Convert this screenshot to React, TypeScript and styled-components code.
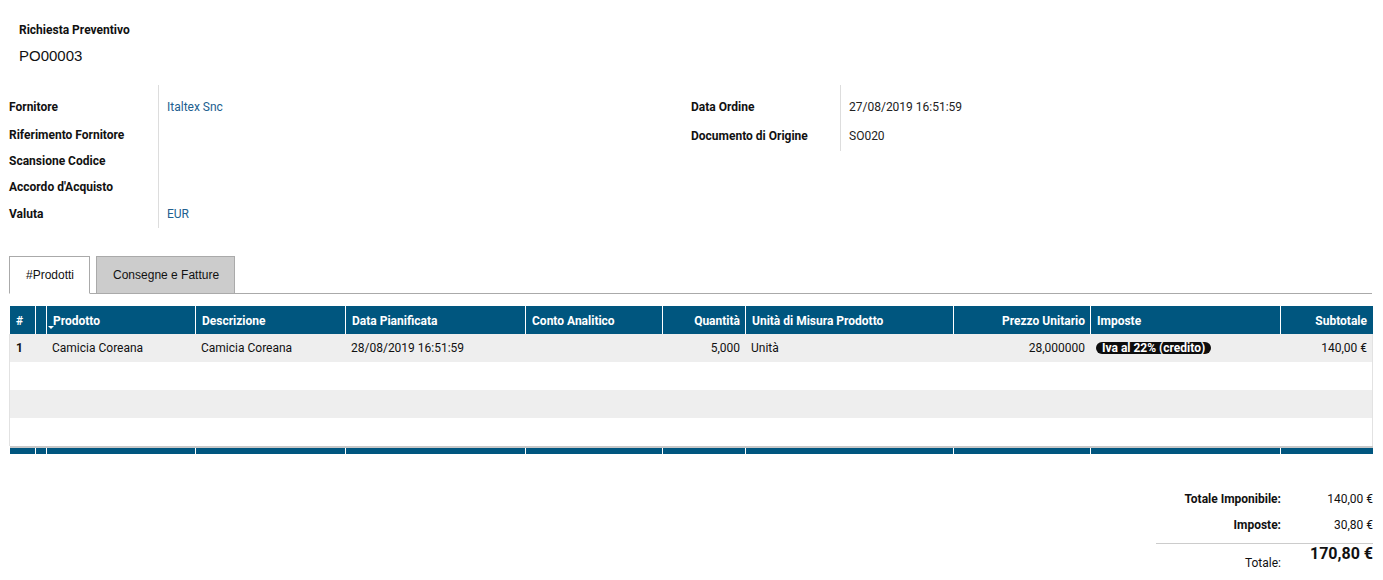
import React from "react";
import styled, { createGlobalStyle } from "styled-components";

const Global = createGlobalStyle`
  html, body { margin: 0; padding: 0; background: #fff; overflow: hidden; }
  body { font-family: Roboto, "Noto Sans", Arial, sans-serif; font-size: 12px; color: #222; }
  * { box-sizing: border-box; }
`;

const Page = styled.div`
  padding: 22px 10px 0 9px;
  width: 1383px;
`;

const TitleBlock = styled.div`
  padding-left: 10px;
`;

const Caption = styled.div`
  font-weight: 700;
  font-size: 12px;
  line-height: 16px;
  color: #111;
`;

const DocNumber = styled.div`
  margin-top: 8px;
  font-family: "Liberation Sans", Arial, sans-serif;
  font-size: 15px;
  line-height: 20px;
  color: #111;
`;

const Groups = styled.div`
  margin-top: 19px;
  display: grid;
  grid-template-columns: 682px 1fr;
  align-items: start;
`;

const Group = styled.div`
  display: flex;
`;

const LabelCol = styled.div`
  width: 149px;
  padding-top: 8px;
`;

const ValueCol = styled.div`
  border-left: 1px solid #ddd;
  padding: 8px 0 0 8px;
  flex: 1;
`;

const Cell = styled.div<{ $h: number }>`
  height: ${(p) => p.$h}px;
  display: flex;
  align-items: center;
  line-height: 16px;
`;

const Label = styled(Cell)`
  font-weight: 700;
  color: #111;
`;

const Value = styled(Cell)<{ $link?: boolean }>`
  color: ${(p) => (p.$link ? "#21608f" : "#222")};
`;

const TabBar = styled.div`
  margin-top: 28px;
  display: flex;
  align-items: flex-end;
  gap: 6px;
  border-bottom: 1px solid #aaa;
  height: 38px;
  margin-right: 1px;
`;

const Tab = styled.div<{ $active?: boolean }>`
  height: ${(p) => (p.$active ? 38 : 37)}px;
  margin-bottom: ${(p) => (p.$active ? -1 : 0)}px;
  padding: 0 15px 0 16px;
  display: flex;
  align-items: center;
  border: 1px solid #aaa;
  border-bottom: ${(p) => (p.$active ? "1px solid #fff" : "0")};
  background: ${(p) => (p.$active ? "#fff" : "#cccccc")};
  font-family: "Liberation Sans", Arial, sans-serif;
  font-size: 12px;
  color: #111;
  padding-bottom: ${(p) => (p.$active ? 1 : 0)}px;
`;

const COLS = "25px 11px 149px 150px 180px 137px 83px 208px 137px 190px 92px";

const Table = styled.div`
  margin-top: 12px;
  width: 1364px;
`;

const HeadRow = styled.div`
  margin-left: 1px;
  display: grid;
  grid-template-columns: ${COLS};
  height: 28px;
  background: #00567f;
`;

const HeadCell = styled.div<{ $right?: boolean; $first?: boolean }>`
  position: relative;
  display: flex;
  align-items: center;
  justify-content: ${(p) => (p.$right ? "flex-end" : "flex-start")};
  padding: 1px 5px 0 6px;
  border-left: ${(p) => (p.$first ? "0" : "1px solid #fff")};
  color: #fff;
  font-weight: 700;
  white-space: nowrap;
  overflow: hidden;
`;

const SortCaret = styled.span`
  position: absolute;
  left: 1px;
  bottom: 5px;
  width: 0;
  height: 0;
  border-left: 3px solid transparent;
  border-right: 3px solid transparent;
  border-top: 3px solid #fff;
`;

const Body = styled.div`
  border-left: 1px solid #e2e2e2;
  border-right: 1px solid #e2e2e2;
`;

const BodyRow = styled.div<{ $odd?: boolean }>`
  display: grid;
  grid-template-columns: ${COLS};
  height: 28px;
  background: ${(p) => (p.$odd ? "#eeeeee" : "#fff")};
`;

const BodyCell = styled.div<{ $right?: boolean; $bold?: boolean }>`
  display: flex;
  align-items: center;
  justify-content: ${(p) => (p.$right ? "flex-end" : "flex-start")};
  padding: 0 5px 0 6px;
  font-weight: ${(p) => (p.$bold ? 700 : 400)};
  color: #111;
  white-space: nowrap;
  overflow: hidden;
`;

const Badge = styled.span`
  display: inline-block;
  background: #0d0d0d;
  color: #fff;
  font-weight: 700;
  font-size: 12px;
  line-height: 12px;
  height: 12px;
  padding: 0 6px;
  border-radius: 6px;
`;

const FootRow = styled.div`
  margin-left: 1px;
  display: grid;
  grid-template-columns: ${COLS};
  height: 8px;
  border-top: 2px solid #c8c8c8;
  background: #00567f;
`;

const FootCell = styled.div<{ $first?: boolean }>`
  border-left: ${(p) => (p.$first ? "0" : "1px solid #fff")};
`;

const Totals = styled.div`
  margin-top: 32px;
  display: grid;
  grid-template-columns: 125px 92px;
  justify-content: end;
`;

const TotLabel = styled.div`
  height: 26px;
  display: flex;
  align-items: center;
  justify-content: flex-end;
  font-weight: 700;
  color: #111;
`;

const TotValue = styled.div`
  height: 26px;
  display: flex;
  align-items: center;
  justify-content: flex-end;
  color: #111;
`;

const TotSep = styled.div`
  grid-column: 1 / -1;
  margin-top: 5px;
  border-top: 1px solid #ccc;
`;

const GrandLabel = styled.div`
  text-align: right;
  padding-top: 11px;
  line-height: 16px;
  color: #111;
`;

const GrandValue = styled.div`
  text-align: right;
  font-weight: 700;
  font-size: 16px;
  line-height: 20px;
  color: #111;
`;

type Col = { title: string; right?: boolean };
const columns: Col[] = [
  { title: "#" },
  { title: "" },
  { title: "Prodotto" },
  { title: "Descrizione" },
  { title: "Data Pianificata" },
  { title: "Conto Analitico" },
  { title: "Quantità", right: true },
  { title: "Unità di Misura Prodotto" },
  { title: "Prezzo Unitario", right: true },
  { title: "Imposte" },
  { title: "Subtotale", right: true },
];

export default function App() {
  return (
    <>
      <Global />
      <Page>
        <TitleBlock>
          <Caption>Richiesta Preventivo</Caption>
          <DocNumber>PO00003</DocNumber>
        </TitleBlock>

        <Groups>
          <Group>
            <LabelCol>
              <Label $h={28}>Fornitore</Label>
              <Label $h={27}>Riferimento Fornitore</Label>
              <Label $h={25}>Scansione Codice</Label>
              <Label $h={27}>Accordo d'Acquisto</Label>
              <Label $h={28}>Valuta</Label>
            </LabelCol>
            <ValueCol>
              <Value $h={28} $link>
                Italtex Snc
              </Value>
              <Value $h={27} />
              <Value $h={25} />
              <Value $h={27} />
              <Value $h={28} $link>
                EUR
              </Value>
            </ValueCol>
          </Group>
          <Group>
            <LabelCol>
              <Label $h={28}>Data Ordine</Label>
              <Label $h={30}>Documento di Origine</Label>
            </LabelCol>
            <ValueCol>
              <Value $h={28}>27/08/2019 16:51:59</Value>
              <Value $h={30}>SO020</Value>
            </ValueCol>
          </Group>
        </Groups>

        <TabBar>
          <Tab $active>#Prodotti</Tab>
          <Tab>Consegne e Fatture</Tab>
        </TabBar>

        <Table>
          <HeadRow>
            {columns.map((c, i) => (
              <HeadCell key={i} $right={c.right} $first={i === 0}>
                {c.title}
                {i === 2 && <SortCaret />}
              </HeadCell>
            ))}
          </HeadRow>
          <Body>
            <BodyRow $odd>
              <BodyCell $bold>1</BodyCell>
              <BodyCell />
              <BodyCell>Camicia Coreana</BodyCell>
              <BodyCell>Camicia Coreana</BodyCell>
              <BodyCell>28/08/2019 16:51:59</BodyCell>
              <BodyCell />
              <BodyCell $right>5,000</BodyCell>
              <BodyCell>Unità</BodyCell>
              <BodyCell $right>28,000000</BodyCell>
              <BodyCell>
                <Badge>Iva al 22% (credito)</Badge>
              </BodyCell>
              <BodyCell $right>140,00 €</BodyCell>
            </BodyRow>
            <BodyRow />
            <BodyRow $odd />
            <BodyRow />
          </Body>
          <FootRow>
            {columns.map((_, i) => (
              <FootCell key={i} $first={i === 0} />
            ))}
          </FootRow>
        </Table>

        <Totals>
          <TotLabel>Totale Imponibile:</TotLabel>
          <TotValue>140,00 €</TotValue>
          <TotLabel>Imposte:</TotLabel>
          <TotValue>30,80 €</TotValue>
          <TotSep />
          <GrandLabel>Totale:</GrandLabel>
          <GrandValue>170,80 €</GrandValue>
        </Totals>
      </Page>
    </>
  );
}
